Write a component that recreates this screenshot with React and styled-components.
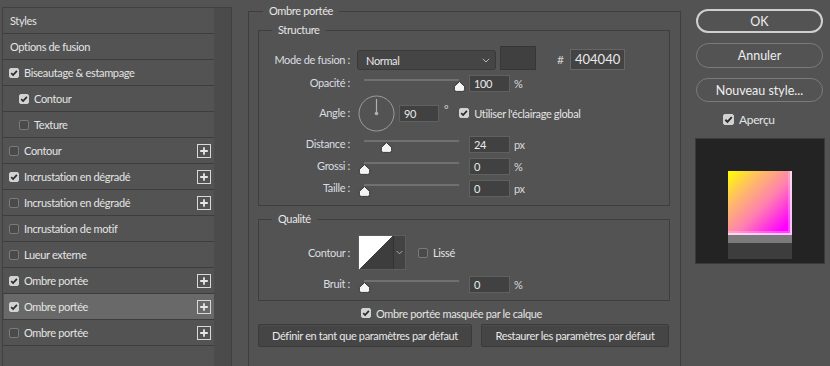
import React from "react";
import styled, { createGlobalStyle } from "styled-components";

const Global = createGlobalStyle`
  html, body { margin: 0; padding: 0; background: #535353; }
  body { font-family: Lato, "Liberation Sans", sans-serif; font-size: 11px; letter-spacing: -0.35px; color: #e2e2e2; }
  * { box-sizing: border-box; }
`;

const Page = styled.div`
  width: 830px;
  height: 366px;
  overflow: hidden;
  display: flex;
  align-items: flex-start;
  background: #535353;
`;

/* ---------- left list ---------- */
const Sidebar = styled.div`
  margin: 7px 0 0 2px;
  width: 230px;
  height: 359px;
  border: 1px solid #404040;
  border-bottom: none;
  display: flex;
  flex-shrink: 0;
`;
const List = styled.div`
  width: 211px;
  display: flex;
  flex-direction: column;
`;
const Strip = styled.div`
  flex: 1;
  background: #4b4b4b;
`;
const Row = styled.div`
  height: 26px;
  flex-shrink: 0;
  display: flex;
  align-items: center;
  gap: 5px;
  padding-left: ${(p) => p.$indent}px;
  padding-right: 3px;
  border-bottom: 1px solid #3d3d3d;
  background: ${(p) => (p.$selected ? "#696969" : "transparent")};
  box-shadow: ${(p) => (p.$selected ? "inset 1px 0 0 #535353" : "none")};
  color: #e4e4e4;
  white-space: nowrap;
`;
const RowLabel = styled.span`
  flex: 1;
`;

const BoxWrap = styled.span`
  display: inline-flex;
  width: ${(p) => p.$size}px;
  height: ${(p) => p.$size}px;
  flex-shrink: 0;
  border-radius: 2px;
  background: ${(p) => (p.$on ? "#d2d2d2" : "#4a4a4a")};
  border: 1px solid ${(p) => (p.$on ? "#d2d2d2" : "#7a7a7a")};
  align-items: center;
  justify-content: center;
`;

const Check = ({ on, size = 10 }) => (
  <BoxWrap $on={on} $size={size}>
    {on && (
      <svg width={size - 2} height={size - 2} viewBox="0 0 8 8">
        <path d="M1.2 4.2 L3.1 6.1 L6.9 1.9" fill="none" stroke="#2b2b2b" strokeWidth="1.7" />
      </svg>
    )}
  </BoxWrap>
);

const PlusBox = styled.svg`
  flex-shrink: 0;
`;
const Plus = () => (
  <PlusBox width="14" height="14" viewBox="0 0 14 14">
    <rect x="0.5" y="0.5" width="13" height="13" fill="none" stroke="#d8d8d8" />
    <path d="M7 3.2 V10.8 M3.2 7 H10.8" stroke="#e6e6e6" strokeWidth="1.8" />
  </PlusBox>
);

const items = [
  { label: "Styles", indent: 7 },
  { label: "Options de fusion", indent: 7 },
  { label: "Biseautage & estampage", indent: 6, check: true },
  { label: "Contour", indent: 16, check: true },
  { label: "Texture", indent: 16, check: false },
  { label: "Contour", indent: 6, check: false, plus: true },
  { label: "Incrustation en dégradé", indent: 6, check: true, plus: true },
  { label: "Incrustation en dégradé", indent: 6, check: false, plus: true },
  { label: "Incrustation de motif", indent: 6, check: false },
  { label: "Lueur externe", indent: 6, check: false },
  { label: "Ombre portée", indent: 6, check: true, plus: true },
  { label: "Ombre portée", indent: 6, check: true, plus: true, selected: true },
  { label: "Ombre portée", indent: 6, check: false, plus: true },
];

/* ---------- main groups ---------- */
const Group = styled.fieldset`
  margin: ${(p) => p.$mt || 0}px 0 0 ${(p) => p.$ml || 0}px;
  padding: 0;
  min-width: 0;
  width: ${(p) => (p.$w ? `${p.$w}px` : "auto")};
  height: ${(p) => (p.$h ? `${p.$h}px` : "auto")};
  border: 1px solid #3e3e3e;
  border-bottom: ${(p) => (p.$open ? "none" : "1px solid #3e3e3e")};
  flex-shrink: 0;
`;
const Legend = styled.legend`
  margin-left: ${(p) => p.$ml}px;
  padding: 0 6px;
  line-height: 14px;
  font-size: 11px;
  color: #e6e6e6;
`;
const MainInner = styled.div`
  padding: 5px 10px 0 9px;
  display: flex;
  flex-direction: column;
`;
const GroupInner = styled.div`
  padding: 9px 0 ${(p) => p.$pb}px 0;
  display: flex;
  flex-direction: column;
`;
const FieldRow = styled.div`
  display: flex;
  align-items: ${(p) => p.$align || "center"};
  height: ${(p) => p.$h}px;
  margin-top: ${(p) => p.$mt || 0}px;
  flex-shrink: 0;
`;
const Label = styled.span`
  width: 91px;
  flex-shrink: 0;
  text-align: right;
  color: #dadde0;
  line-height: ${(p) => p.$lh || 14}px;
  white-space: nowrap;
`;
const Select = styled.div`
  margin-left: 7px;
  width: 139px;
  height: 20px;
  background: #454545;
  border: 1px solid #393939;
  border-radius: 3px;
  display: flex;
  align-items: center;
  justify-content: space-between;
  padding: 0 5px 0 8px;
  color: #e8e8e8;
`;
const Swatch = styled.div`
  margin-left: 4px;
  width: 36px;
  height: 24px;
  background: #404040;
  border: 1px solid #363636;
`;
const Hash = styled.span`
  margin-left: 21px;
  width: 13px;
  line-height: 21px;
  font-size: 12px;
  color: #cfd3d6;
`;
const HexInput = styled.div`
  width: 55px;
  height: 21px;
  background: #434343;
  border: 1px solid #676767;
  padding-left: 4px;
  line-height: 19px;
  font-size: 13px;
  letter-spacing: 0;
  color: #eaeaea;
`;
const NumInput = styled.div`
  margin-left: ${(p) => p.$ml}px;
  width: ${(p) => p.$w || 41}px;
  height: 17px;
  background: #414141;
  border: 1px solid #606060;
  padding-left: 4px;
  line-height: 15px;
  color: #eaeaea;
  flex-shrink: 0;
`;
const Unit = styled.span`
  margin-left: ${(p) => p.$ml || 4}px;
  color: #d8dadc;
  align-self: ${(p) => (p.$sup ? "flex-start" : "auto")};
  margin-top: ${(p) => (p.$sup ? 9 : 0)}px;
`;
const SliderBox = styled.div`
  position: relative;
  margin-left: 7px;
  width: 109px;
  height: 22px;
  flex-shrink: 0;
  align-self: stretch;
`;
const Track = styled.div`
  margin: 7px 7px 0;
  height: 2px;
  background: #707070;
`;
const ThumbSvg = styled.svg`
  position: absolute;
  top: 9px;
`;
const Slider = ({ pct }) => (
  <SliderBox>
    <Track />
    <ThumbSvg width="13" height="11" viewBox="0 0 13 11" style={{ left: 7 + pct * 95 - 6.5 }}>
      <path d="M6.5 0.6 L11.6 5.4 V8.6 Q11.6 10.4 9.8 10.4 H3.2 Q1.4 10.4 1.4 8.6 V5.4 Z" fill="#f4f4f4" stroke="#2e2e2e" strokeWidth="0.9" />
    </ThumbSvg>
  </SliderBox>
);

const Dial = styled.svg`
  margin-left: 8px;
  flex-shrink: 0;
`;
const CheckLabel = styled.label`
  display: inline-flex;
  align-items: center;
  gap: 5px;
  margin-left: ${(p) => p.$ml || 0}px;
  color: #e4e4e4;
  font-size: ${(p) => p.$fs || 11}px;
  white-space: nowrap;
`;
const ContourPicker = styled.div`
  margin-left: 8px;
  display: flex;
  height: 35px;
  border: 1px solid #5d5d5d;
  flex-shrink: 0;
`;
const ContourSwatch = styled.div`
  width: 35px;
  background: linear-gradient(to bottom right, #ffffff 50%, #3d3d3d 50%);
  border-right: 1px solid #333;
`;
const ContourDrop = styled.div`
  width: 11px;
  background: #434343;
  display: flex;
  align-items: center;
  justify-content: center;
`;
const Chevron = ({ w = 8 }) => (
  <svg width={w} height="5" viewBox="0 0 8 5">
    <path d="M0.8 0.8 L4 4 L7.2 0.8" fill="none" stroke="#b8b8b8" strokeWidth="1" />
  </svg>
);
const ButtonsRow = styled.div`
  display: flex;
  gap: 9px;
  margin-top: 1px;
`;
const FlatButton = styled.div`
  width: ${(p) => p.$w}px;
  height: 23px;
  background: #454545;
  border: 1px solid #3a3a3a;
  border-radius: 2px;
  box-shadow: inset 0 1px 0 #4d4d4d;
  display: flex;
  align-items: center;
  justify-content: center;
  color: #e8e8e8;
  white-space: nowrap;
`;

/* ---------- right column ---------- */
const Side = styled.div`
  margin: 9px 0 0 15px;
  width: 127px;
  display: flex;
  flex-direction: column;
  flex-shrink: 0;
`;
const Pill = styled.div`
  height: ${(p) => p.$h}px;
  margin-top: ${(p) => p.$mt || 0}px;
  border-radius: 13px;
  border: ${(p) => (p.$primary ? "2px solid #cfcfcf" : "1px solid #7b7b7b")};
  display: flex;
  align-items: center;
  justify-content: center;
  font-size: 12.5px;
  letter-spacing: 0;
  color: #eeeeee;
`;
const PreviewRow = styled.div`
  margin-top: 8px;
  height: 18px;
  padding-left: 27px;
  display: flex;
  align-items: center;
`;
const Preview = styled.div`
  margin: 10px 0 0 -1px;
  width: 130px;
  height: 126px;
  background: #232323;
  border: 1px solid #3a3a3a;
  display: flex;
  flex-direction: column;
  align-items: center;
  padding-top: 32px;
`;
const PreviewSquare = styled.div`
  width: 64px;
  height: 64px;
  background: linear-gradient(135deg, #ffff00 0%, #ffc060 25%, #ff80b0 55%, #ff00ff 88%);
  box-shadow: inset -2px -2px 0 rgba(255, 235, 255, 0.75), inset -4px -4px 0 rgba(255, 200, 255, 0.35);
`;
const PreviewBar = styled.div`
  width: 64px;
  height: ${(p) => p.$h}px;
  background: ${(p) => p.$c};
`;

export default function App() {
  return (
    <>
      <Global />
      <Page>
        <Sidebar>
          <List>
            {items.map((it, i) => (
              <Row key={i} $indent={it.indent} $selected={it.selected}>
                {it.check !== undefined && <Check on={it.check} />}
                <RowLabel>{it.label}</RowLabel>
                {it.plus && <Plus />}
              </Row>
            ))}
          </List>
          <Strip />
        </Sidebar>

        <Group $mt={4} $ml={16} $w={433} $h={400} $open>
          <Legend $ml={14}>Ombre portée</Legend>
          <MainInner>
            <Group>
              <Legend $ml={13}>Structure</Legend>
              <GroupInner $pb={6}>
                <FieldRow $h={24} $align="flex-end">
                  <Label $lh={20}>Mode de fusion :</Label>
                  <Select>
                    <span>Normal</span>
                    <Chevron />
                  </Select>
                  <Swatch />
                  <Hash>#</Hash>
                  <HexInput>404040</HexInput>
                </FieldRow>
                <FieldRow $h={22} $mt={2}>
                  <Label>Opacité :</Label>
                  <Slider pct={1} />
                  <NumInput $ml={3}>100</NumInput>
                  <Unit>%</Unit>
                </FieldRow>
                <FieldRow $h={38}>
                  <Label>Angle :</Label>
                  <Dial width="37" height="37" viewBox="0 0 37 37">
                    <circle cx="18.5" cy="18.5" r="17.5" fill="none" stroke="#9c9c9c" strokeWidth="1" />
                    <path d="M18.5 18.5 V4" stroke="#b0b0b0" strokeWidth="1.2" />
                    <circle cx="18.5" cy="18.5" r="1.8" fill="#b0b0b0" />
                  </Dial>
                  <NumInput $ml={4} $w={40}>90</NumInput>
                  <Unit $ml={5} $sup>°</Unit>
                  <CheckLabel $ml={11}>
                    <Check on />
                    Utiliser l'éclairage global
                  </CheckLabel>
                </FieldRow>
                <FieldRow $h={22} $mt={1}>
                  <Label>Distance :</Label>
                  <Slider pct={0.24} />
                  <NumInput $ml={3}>24</NumInput>
                  <Unit>px</Unit>
                </FieldRow>
                <FieldRow $h={22}>
                  <Label>Grossi :</Label>
                  <Slider pct={0} />
                  <NumInput $ml={3}>0</NumInput>
                  <Unit>%</Unit>
                </FieldRow>
                <FieldRow $h={22}>
                  <Label>Taille :</Label>
                  <Slider pct={0} />
                  <NumInput $ml={3}>0</NumInput>
                  <Unit>px</Unit>
                </FieldRow>
              </GroupInner>
            </Group>

            <Group $mt={6}>
              <Legend $ml={13}>Qualité</Legend>
              <GroupInner $pb={5}>
                <FieldRow $h={35}>
                  <Label>Contour :</Label>
                  <ContourPicker>
                    <ContourSwatch />
                    <ContourDrop>
                      <Chevron w={7} />
                    </ContourDrop>
                  </ContourPicker>
                  <CheckLabel $ml={12}>
                    <Check on={false} />
                    Lissé
                  </CheckLabel>
                </FieldRow>
                <FieldRow $h={22} $mt={3}>
                  <Label>Bruit :</Label>
                  <Slider pct={0} />
                  <NumInput $ml={3}>0</NumInput>
                  <Unit>%</Unit>
                </FieldRow>
              </GroupInner>
            </Group>

            <FieldRow $h={20} $mt={2}>
              <CheckLabel $ml={103}>
                <Check on />
                Ombre portée masquée par le calque
              </CheckLabel>
            </FieldRow>
            <ButtonsRow>
              <FlatButton $w={214}>Définir en tant que paramètres par défaut</FlatButton>
              <FlatButton $w={188}>Restaurer les paramètres par défaut</FlatButton>
            </ButtonsRow>
          </MainInner>
        </Group>

        <Side>
          <Pill $h={24} $primary>OK</Pill>
          <Pill $h={25} $mt={10}>Annuler</Pill>
          <Pill $h={24} $mt={10}>Nouveau style...</Pill>
          <PreviewRow>
            <CheckLabel $fs={12}>
              <Check on size={11} />
              Aperçu
            </CheckLabel>
          </PreviewRow>
          <Preview>
            <PreviewSquare />
            <PreviewBar $h={8} $c="#7b7b7b" />
            <PreviewBar $h={16} $c="#3d3d3d" />
          </Preview>
        </Side>
      </Page>
    </>
  );
}
